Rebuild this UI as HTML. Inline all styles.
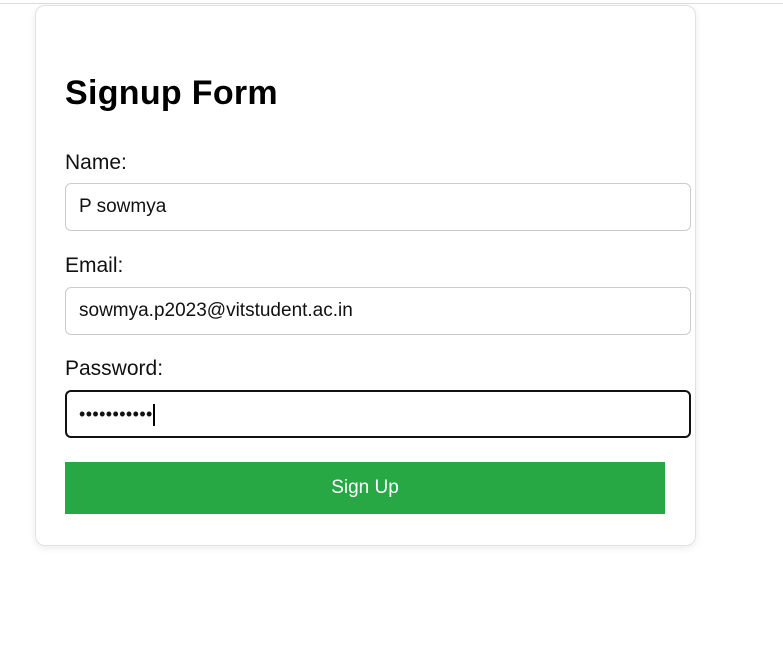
<!DOCTYPE html>
<html><head><style>
body{margin:0;width:783px;height:645px;background:#fff;font-family:"Liberation Sans",sans-serif;position:relative;overflow:hidden}
.topline{position:absolute;left:0;top:3px;width:783px;height:1px;background:#ddd}
.card{position:absolute;left:35px;top:5px;width:659px;height:539px;border:1px solid #e2e2e2;border-radius:10px;background:#fff;box-shadow:0 2px 8px rgba(0,0,0,.08)}
h1{position:absolute;left:65px;top:73px;margin:0;font-size:34px;font-weight:bold;line-height:40px;letter-spacing:0.3px}
.lbl{position:absolute;left:65px;font-size:21px;line-height:26px;color:#111}
.in{position:absolute;left:65px;width:626px;height:48px;border:1px solid #ccc;border-radius:6px;box-sizing:border-box;font-size:19px;padding-left:13px;line-height:46px;color:#111}
.focus{border:2px solid #111;padding-left:12px;line-height:44px}
.btn{position:absolute;left:65px;top:462px;width:600px;height:52px;background:#28a745;color:#fff;font-size:19px;text-align:center;line-height:52px}
</style></head><body>
<div class="topline"></div>
<div class="card"></div>
<h1>Signup Form</h1>
<div class="lbl" style="top:150px">Name:</div>
<div class="in" style="top:183px">P sowmya</div>
<div class="lbl" style="top:253px">Email:</div>
<div class="in" style="top:287px">sowmya.p2023@vitstudent.ac.in</div>
<div class="lbl" style="top:356px">Password:</div>
<div class="in focus" style="top:390px"><span style="letter-spacing:0.4px;font-size:18px">•••••••••••</span><span style="display:inline-block;width:2px;height:22px;background:#000;vertical-align:middle"></span></div>
<div class="btn">Sign Up</div>
</body></html>
